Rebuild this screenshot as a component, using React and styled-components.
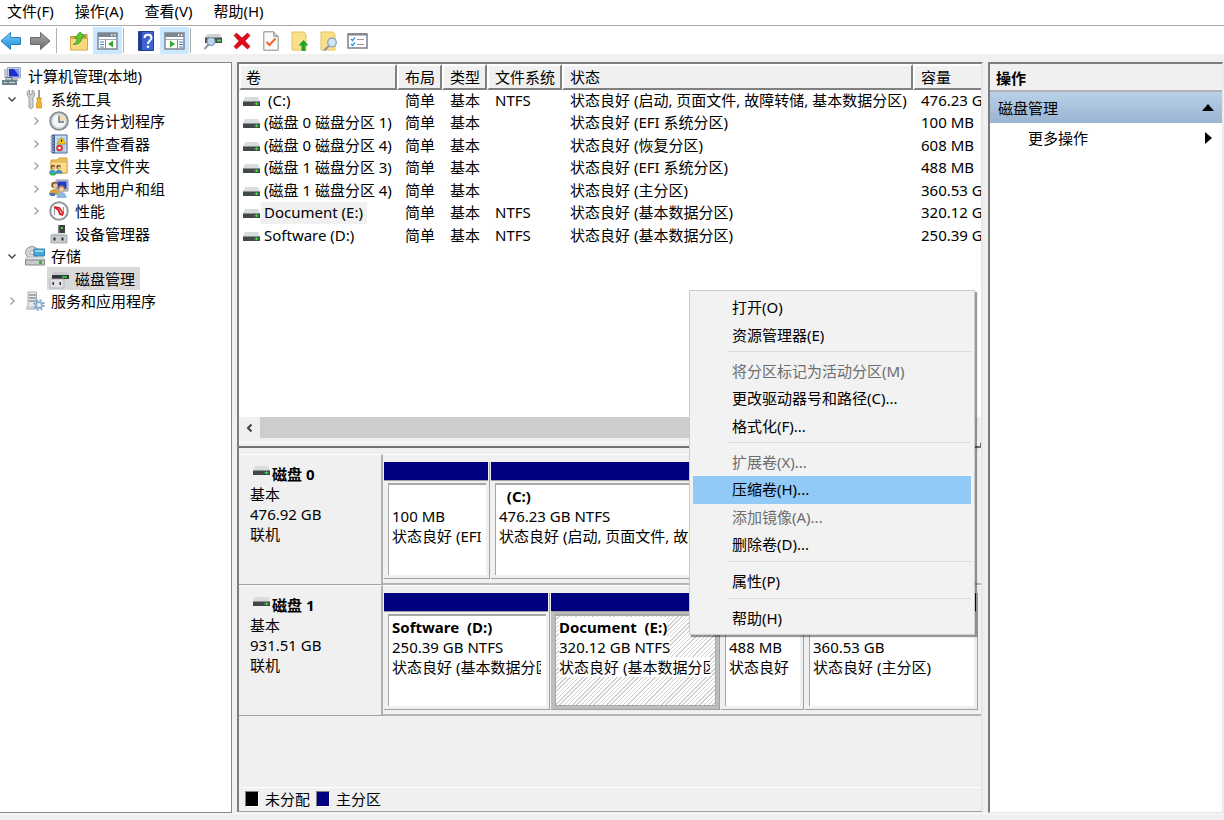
import React, { useState } from "react";
import styled, { createGlobalStyle, css } from "styled-components";

const GlobalStyle = createGlobalStyle`
  * {
    box-sizing: border-box;
  }

  body {
    margin: 0;
    background: #f0f0f0;
    color: #000000;
    font-family: "Noto Sans", "Noto Sans CJK SC", sans-serif;
    font-size: 15px;
    line-height: 22px;
  }

  button {
    margin: 0;
    padding: 0;
    border: none;
    background: none;
    color: inherit;
    font: inherit;
    text-align: left;
    white-space: nowrap;
  }

  ul {
    margin: 0;
    padding: 0;
    list-style: none;
  }

  svg {
    display: block;
    flex: none;
  }
`;

const Window = styled.div`
  position: relative;
  display: flex;
  flex-direction: column;
  min-height: 100vh;
  overflow: hidden;
`;

const MenuBar = styled.nav`
  display: flex;
  gap: 21px;
  height: 26px;
  padding: 0 7px 4px;
  background: #ffffff;
  border-bottom: 1px solid #a9a9a9;
`;

const ToolBar = styled.div`
  display: flex;
  align-items: flex-end;
  height: 28px;
  background: #ffffff;
`;

const ToolGroup = styled.div`
  display: flex;
  gap: ${(props) => (props.$nav ? "7px" : "0")};
  padding-right: ${(props) => (props.$nav ? "4px" : "0")};
`;

const ToolButton = styled.button`
  display: flex;
  align-items: center;
  justify-content: center;
  width: ${(props) => (props.$nav ? "22px" : "29px")};
  height: 27px;
  background: ${(props) => (props.$active ? "#cce8ff" : "transparent")};
`;

const ToolSeparator = styled.div`
  width: 1px;
  height: 25px;
  margin: 0 7px 1px 1px;
  background: #b0b0b0;
`;

const Workspace = styled.main`
  display: flex;
  flex: 1;
  gap: 5px;
  padding: 8px 1px 0 0;
`;

const StatusBar = styled.footer`
  height: 7px;
  border-top: 1px solid #f8f8f8;
`;

/* left tree */

const Tree = styled.ul`
  flex: none;
  width: 232px;
  padding-top: 2px;
  background: #ffffff;
  border: 1px solid #828790;
  border-left: none;
`;

const TreeRow = styled.li`
  display: flex;
  height: 22px;
  padding-left: ${(props) => (props.$level > 1 ? "24px" : "0")};

  &:nth-child(even) {
    height: 23px;
  }
`;

const Toggle = styled.span`
  display: flex;
  align-items: center;
  justify-content: center;
  width: 23px;
`;

const TreeLabel = styled.button`
  display: flex;
  align-items: center;
  gap: 6px;
  padding: 0 5px 0 2px;
  background: ${(props) => (props.$selected ? "#d9d9d9" : "transparent")};
`;

/* middle pane */

const Center = styled.section`
  display: flex;
  flex: 1;
  flex-direction: column;
  min-width: 0;
  margin-bottom: 1px;
  border-style: solid;
  border-width: 2px 2px 1px;
  border-color: #7c7c7c #e6e6e6 #a0a0a0 #7c7c7c;
`;

const VolumePane = styled.div`
  display: flex;
  flex-direction: column;
  height: 374px;
  overflow: hidden;
  background: #ffffff;
`;

const VolumeTable = styled.table`
  width: 100%;
  table-layout: fixed;
  border-collapse: separate;
  border-spacing: 0;
`;

const Col = styled.col`
  width: ${(props) => props.$width || "auto"};
`;

const HeadCell = styled.th`
  height: 26px;
  padding: 0 0 0 6px;
  overflow: hidden;
  background: #f0f0f0;
  border-style: solid;
  border-width: 2px;
  border-color: #ffffff #808080 #808080 #ffffff;
  font-weight: normal;
  text-align: left;
  white-space: nowrap;

  &:first-child {
    padding-left: 5px;
  }

  &:last-child {
    border-right: none;
  }
`;

const VolumeRow = styled.tr`
  height: 22px;

  &:nth-child(even) {
    height: 23px;
  }
`;

const Cell = styled.td`
  padding: 0 0 0 8px;
  overflow: hidden;
  line-height: 20px;
  vertical-align: top;
  white-space: nowrap;

  &:first-child {
    padding-left: 4px;
  }
`;

const VolumeName = styled.div`
  display: flex;
  align-items: center;
  gap: 1px;
`;

const NameText = styled.span`
  padding: 0 4px 2px 3px;
  background: ${(props) => (props.$selected ? "#f0f0f0" : "transparent")};
  white-space: pre;
`;

const ScrollBar = styled.div`
  display: flex;
  height: 21px;
  margin-top: auto;
  background: #f0f0f0;
`;

const ScrollArrow = styled.button`
  display: flex;
  align-items: center;
  justify-content: center;
  width: 21px;
`;

const ScrollThumb = styled.div`
  width: 68%;
  background: #cdcdcd;
`;

const Splitter = styled.div`
  height: 6px;
  margin-top: 4px;
  border-style: solid;
  border-width: 1px 1px 2px 0;
  border-color: #ffffff #707070 #707070;
`;

const DiskList = styled.div`
  flex: 1;
  padding-top: 6px;
`;

const Disk = styled.section`
  display: flex;
  height: 131px;
`;

const DiskLabel = styled.div`
  flex: none;
  width: 144px;
  padding: 9px 0 0 11px;
  border-style: solid;
  border-width: 1px 2px 1px 0;
  border-color: #ffffff #b0b0b0 #a0a0a0;
  line-height: 20px;
`;

const DiskTitle = styled.div`
  display: flex;
  gap: 2px;
  padding-left: 3px;
  font-weight: bold;

  svg {
    margin-top: 2px;
  }
`;

const Partitions = styled.div`
  display: grid;
  flex: 1;
  grid-template-columns: ${(props) => props.$columns};
  gap: 1px;
  min-width: 0;
  padding: 7px 3px 4px 1px;
  border-top: 1px solid #ffffff;
  border-bottom: 2px solid #b4b4b4;
`;

const Partition = styled.div`
  display: flex;
  flex-direction: column;
  min-width: 0;
  border-right: 1px solid #a0a0a0;
  border-bottom: 1px solid #a0a0a0;
  background: ${(props) => (props.$selected ? "#bdbdbd" : "#f0f0f0")};
`;

const PartitionBar = styled.div`
  height: 19px;
  margin-right: 1px;
  background: #000080;
  border-bottom: 1px solid #a0a0a0;
`;

const PartitionBox = styled.div`
  flex: 1;
  margin: 2px 3px 3px 4px;
  padding: 1px 5px 0 3px;
  background: #ffffff;
  border-style: solid;
  border-width: 2px 0 0 1px;
  border-color: #a8a8a8;
  line-height: 20px;

  ${(props) =>
    props.$selected &&
    css`
      border-width: 2px 1px 1px;
      background: repeating-linear-gradient(
        135deg,
        #ffffff 0 2px,
        #d0d0d0 2px 3px
      );
    `}
`;

const PartitionLine = styled.div`
  height: 20px;
  overflow: hidden;
  font-weight: ${(props) => (props.$bold ? "bold" : "normal")};
  text-overflow: clip;
  white-space: pre;

  span {
    background: #ffffff;
  }
`;

const Legend = styled.div`
  display: flex;
  align-items: center;
  gap: 6px;
  height: 24px;
  padding: 0 0 1px 6px;
  border-top: 1px solid #ffffff;
`;

const Swatch = styled.span`
  width: 14px;
  height: 16px;
  background: ${(props) => props.$color};
  border-style: solid;
  border-width: 1px;
  border-color: #808080 #ffffff #ffffff #808080;
`;

/* right pane */

const Actions = styled.aside`
  flex: none;
  width: 235px;
  background: #ffffff;
  border-style: solid;
  border-width: 2px 1px 1px 2px;
  border-color: #7c7c7c #e6e6e6 #e6e6e6 #7c7c7c;
`;

const ActionsTitle = styled.h2`
  height: 28px;
  margin: 0;
  padding: 3px 6px 0;
  background: #f0f0f0;
  border-bottom: 2px solid #b4b4b4;
  font-size: 15px;
  font-weight: bold;
`;

const ActionsGroup = styled.button`
  display: flex;
  align-items: center;
  justify-content: space-between;
  width: 100%;
  height: 31px;
  padding: 0 8px;
  background: linear-gradient(#b9d1ea, #99b4d1);
`;

const ActionsItem = styled.button`
  display: flex;
  align-items: center;
  justify-content: space-between;
  width: 100%;
  height: 30px;
  padding: 0 10px 0 38px;
`;

/* context menu of the selected volume */

const ContextMenu = styled.ul`
  position: absolute;
  top: 290px;
  left: 689px;
  width: 286px;
  padding: 3px 3px 1px;
  background: #f2f2f2;
  border: 1px solid #cccccc;
  box-shadow: 2px 2px 1px rgba(0, 0, 0, 0.4);
`;

const MenuEntry = styled.li`
  height: 27px;

  &:nth-child(odd),
  &:last-child {
    height: 28px;
  }
`;

const MenuItem = styled.button`
  width: 100%;
  height: 100%;
  padding: 0 0 2px 39px;
  background: ${(props) => (props.$highlight ? "#91c9f7" : "transparent")};

  &:disabled {
    color: #6d6d6d;
  }
`;

const MenuDivider = styled.li`
  height: 9px;
  padding: 2px 0 0 35px;

  &::before {
    content: "";
    display: block;
    height: 1px;
    background: #dadada;
  }
`;

/* icons */

const DiskIcon = () => (
  <svg width="17" height="9" viewBox="0 0 17 9">
    <path d="M2 0h13l2 4.500H0z" fill="#d9dcdf" />
    <path d="M0 4.500h17V9H0z" fill="#45484a" />
    <path d="M0 4h17v1H0z" fill="#8d9092" />
    <path d="M11.500 6.800h4M13.500 5.300v3" stroke="#4be04b" strokeWidth="1" />
  </svg>
);

const ArrowIcon = ({ forward }) => (
  <svg width="22" height="20" viewBox="0 0 22 20">
    <defs>
      <linearGradient id={forward ? "fwd" : "back"} x1="0" y1="0" x2="0" y2="1">
        <stop offset="0" stopColor={forward ? "#a9a9a9" : "#7fd0f7"} />
        <stop offset="1" stopColor={forward ? "#6d6d6d" : "#1689d6"} />
      </linearGradient>
    </defs>
    <path
      d={
        forward
          ? "M1.500 6.500h10V1.500L21 10l-9.500 8.500v-5h-10z"
          : "M20.500 6.500h-10V1.500L1 10l9.500 8.500v-5h10z"
      }
      fill={forward ? "url(#fwd)" : "url(#back)"}
      stroke={forward ? "#6a6a6a" : "#2d84bd"}
      strokeLinejoin="round"
    />
  </svg>
);

const FolderOpenIcon = () => (
  <svg width="20" height="20" viewBox="0 0 20 20">
    <path d="M1.500 5.500h8l2-2h6.500v14H1.500z" fill="#e3b54f" stroke="#c49a3a" />
    <path d="M1.500 7.500h17V19h-17z" fill="#f9d97e" stroke="#d0a648" />
    <path
      d="M4 13.500c3-1 4-3 4-6.500H5.500L11 1l5.500 5h-3.500c0 5-4 8-9 7.500z"
      fill="#5fc335"
      stroke="#3a9a1d"
      strokeWidth="0.800"
    />
  </svg>
);

const PaneIcon = ({ right }) => (
  <svg width="21" height="18" viewBox="0 0 21 18">
    <path d="M1 1h19v16H1z" fill="#ffffff" stroke="#7d8794" strokeWidth="1.500" />
    <path d="M1 1h19v4H1z" fill="#7d8794" />
    <path d="M14 3h1.500M17 3h1.500" stroke="#ffffff" strokeWidth="1.500" />
    <path d="M1 7.500h19" stroke="#a3acb8" />
    {right ? (
      <>
        <path d="M13.500 8v9" stroke="#7d8794" />
        <path d="M15 10h4M15 12.500h4M15 15h4" stroke="#4a7cc0" />
        <path d="M6 8.500v7l5-3.500z" fill="#35a82b" />
      </>
    ) : (
      <>
        <path d="M8.500 8v9" stroke="#7d8794" />
        <path d="M3 10h4M3 12.500h4M3 15h4" stroke="#4a7cc0" />
        <path d="M16 8.500v7l-5-3.500z" fill="#35a82b" />
      </>
    )}
  </svg>
);

const HelpIcon = () => (
  <svg width="18" height="20" viewBox="0 0 18 20">
    <path d="M1.500.5h15v19h-15z" fill="#3f63d0" stroke="#23408f" />
    <path d="M2 1h3v18H2z" fill="#1f3c96" />
    <path
      d="M7.500 7c0-4.500 7-4.500 7 0 0 2.500-3.500 2.500-3.500 6"
      fill="none"
      stroke="#ffffff"
      strokeWidth="2"
    />
    <circle cx="11" cy="15.800" r="1.300" fill="#ffffff" />
  </svg>
);

const DiskSearchIcon = () => (
  <svg width="20" height="18" viewBox="0 0 20 18">
    <path d="M4 2h13l2 3.500H2z" fill="#cfd3d6" />
    <path d="M2 5.500h17V11H2z" fill="#46494b" />
    <path d="M14 8.500h4" stroke="#4be04b" strokeWidth="2" />
    <path d="M6 12l-4.500 5" stroke="#8a98a8" strokeWidth="2" />
    <circle cx="8" cy="9.500" r="4" fill="#b9d6ee" stroke="#8199b0" strokeWidth="1.200" />
  </svg>
);

const DeleteIcon = () => (
  <svg width="18" height="18" viewBox="0 0 18 18">
    <path
      d="M1 3.500L3.500 1 9 6l5.500-5L17 3.500 12 9l5 5.500-2.500 2.500L9 12l-5.500 5L1 14.500 6 9z"
      fill="#e00b18"
      stroke="#a80510"
      strokeWidth="0.600"
    />
  </svg>
);

const CheckPageIcon = () => (
  <svg width="16" height="20" viewBox="0 0 16 20">
    <path d="M.8.800h10l4.400 4.400v14H.8z" fill="#fafafa" stroke="#8a8a8a" />
    <path d="M10.800.800v4.400h4.400" fill="#d8d8d8" stroke="#8a8a8a" />
    <path d="M3.500 11l3 3 6-6.500" fill="none" stroke="#f0652a" strokeWidth="2" />
  </svg>
);

const PageUpIcon = () => (
  <svg width="18" height="20" viewBox="0 0 18 20">
    <path d="M1 1h12l2 3v15H1z" fill="#fbe08a" stroke="#e5bf57" />
    <path d="M12.500 9l5 5.500h-3V20h-4v-5.500h-3z" fill="#1fa52d" />
  </svg>
);

const PageSearchIcon = () => (
  <svg width="20" height="20" viewBox="0 0 20 20">
    <path d="M2 1h12l2 3v15H2z" fill="#fbe08a" stroke="#e5bf57" />
    <path d="M10 15l-5 4.500" stroke="#8a98a8" strokeWidth="2" />
    <circle cx="13" cy="11.500" r="4.300" fill="#cfe7f8" stroke="#7d9fbd" strokeWidth="1.200" />
  </svg>
);

const ListIcon = () => (
  <svg width="21" height="16" viewBox="0 0 21 16">
    <path d="M1 1h19v14H1z" fill="#ffffff" stroke="#7d8087" strokeWidth="1.500" />
    <path d="M1 1.500h19" stroke="#7d8087" strokeWidth="2" />
    <path
      d="M4 6l1.500 1.500L8 4.500M4 11l1.500 1.500L8 9.500"
      fill="none"
      stroke="#2d8fe0"
      strokeWidth="1.200"
    />
    <path d="M10 6.500h7M10 11.500h7" stroke="#9a9a9a" />
  </svg>
);

const ComputerIcon = () => (
  <svg width="20" height="20" viewBox="0 0 20 20">
    <path d="M5.500 1.500h13v10.500h-13z" fill="#c8ccd6" stroke="#a3a9b8" />
    <path d="M7 3h10v7.500H7z" fill="#1b2fd0" />
    <path d="M12 3h5v7z" fill="#7f97f0" />
    <path d="M10 12h5l2 3H9z" fill="#b8bdc5" />
    <path d="M2 3h3v9H2z" fill="#c3c9cf" />
    <path d="M0 14h15v5H0z" fill="#6f8490" />
    <path d="M4 11.500h6v2.500H4z" fill="none" stroke="#5f7480" />
    <path d="M2 16.500h3M7 16.500h6" stroke="#cfdae0" />
  </svg>
);

const ToolsIcon = () => (
  <svg width="20" height="20" viewBox="0 0 20 20">
    <path
      d="M4.500 1v4.500H7V1c3.500 1 3.500 6 1 7.500V18c0 2-4 2-4 0V8.500C1.500 7 1.500 2 4.500 1z"
      fill="#cdd1d4"
      stroke="#858a8e"
      strokeWidth="0.800"
    />
    <path d="M13 1h2v8h-2z" fill="#9aa0a5" />
    <path d="M11.500 9h5l-1 3 1 2v5h-5v-5l1-2z" fill="#f5b52a" stroke="#bb8210" strokeWidth="0.600" />
  </svg>
);

const ClockIcon = () => (
  <svg width="20" height="20" viewBox="0 0 20 20">
    <circle cx="10" cy="10" r="8.800" fill="#f4f5f6" stroke="#8c9094" strokeWidth="2" />
    <path d="M10 10V3.500A6.500 6.500 0 0 1 16.500 10z" fill="#f6dfae" />
    <circle cx="10" cy="10" r="7" fill="none" stroke="#c3c7ca" strokeWidth="0.800" />
    <path d="M10 4.500V11h5" fill="none" stroke="#58728a" strokeWidth="1.400" />
  </svg>
);

const EventIcon = () => (
  <svg width="20" height="20" viewBox="0 0 20 20">
    <path d="M3 1h15v18H3z" fill="#c8dcf2" stroke="#4a659c" />
    <path d="M3 1h3v18H3z" fill="#4a659c" />
    <path d="M1 3h4M1 6h4M1 9h4M1 12h4M1 15h4M1 17.500h4" stroke="#a5afbd" />
    <path d="M8 5h8M8 8h8M8 11h8M8 14h8M8 17h8" stroke="#7f9cc8" strokeWidth="0.800" />
    <path d="M12.500 3l4.500 7H8z" fill="#f7c91d" stroke="#b88c0a" strokeWidth="0.600" />
    <path d="M12.500 5.500v2.500" stroke="#333333" strokeWidth="1.200" />
    <circle cx="10.500" cy="14" r="3.300" fill="#e03232" />
    <circle cx="10.500" cy="14" r="1.300" fill="#ffffff" />
  </svg>
);

const SharedFolderIcon = () => (
  <svg width="20" height="20" viewBox="0 0 20 20">
    <path d="M2 4h6l2-2h8v15H2z" fill="#eec25a" stroke="#cfa03d" />
    <path d="M2 6h16v11H2z" fill="#fbdd8c" stroke="#d9ad4c" />
    <circle cx="4" cy="11" r="2.200" fill="#7a4c2a" />
    <circle cx="9.500" cy="11" r="2.200" fill="#7a4c2a" />
    <circle cx="4.500" cy="11.800" r="1.400" fill="#f0c8a0" />
    <circle cx="10" cy="11.800" r="1.400" fill="#f0c8a0" />
    <path d="M0 17.500c0-5 7-5 7 0z" fill="#3c9bd0" />
    <path d="M6.500 17.500c0-5 7-5 7 0z" fill="#3f8fc4" />
    <path d="M0 17h8l-2 2.500H2z" fill="#3fae62" />
  </svg>
);

const UsersIcon = () => (
  <svg width="20" height="20" viewBox="0 0 20 20">
    <path d="M7 1h12v11H7z" fill="#c5cbd8" stroke="#8e95a5" />
    <path d="M8.500 2.500h9V10h-9z" fill="#2238c8" />
    <circle cx="5.500" cy="6" r="3.300" fill="#8a5a34" />
    <circle cx="6.300" cy="6.800" r="2.300" fill="#f0c8a0" />
    <path d="M0 16c0-8 11-8 11 0z" fill="#d9a23c" />
    <circle cx="12.500" cy="9.500" r="3.300" fill="#a87a4a" />
    <circle cx="12.500" cy="10.300" r="2.300" fill="#f3cfaa" />
    <path d="M7.500 19c0-8 10-8 10 0z" fill="#8fb5e0" />
    <path d="M0 14h6v3H2z" fill="#4a72b8" />
  </svg>
);

const GaugeIcon = () => (
  <svg width="20" height="20" viewBox="0 0 20 20">
    <circle cx="10" cy="10" r="8.800" fill="#fbfbfb" stroke="#94989c" strokeWidth="2" />
    <path d="M5.500 14V6.500M14.500 13V6" fill="none" stroke="#777777" strokeWidth="0.800" />
    <path d="M5.500 6l4 3 1.500 4 3 1" fill="none" stroke="#d8191f" strokeWidth="2" />
    <path d="M5.500 6l5 1 4 6" fill="none" stroke="#d8191f" strokeWidth="1.500" />
  </svg>
);

const DeviceIcon = () => (
  <svg width="20" height="20" viewBox="0 0 20 20">
    <path d="M9 1h7v9H9z" fill="#3c3f42" />
    <path d="M9 1h1.500v9H9z" fill="#7a7d80" />
    <path d="M12 3h2v2h-2z" fill="#45d545" />
    <path d="M4 9h12l2 3H2z" fill="#e3e5e7" />
    <path d="M2 11h16v8H2z" fill="#c9cccf" stroke="#9a9da0" strokeWidth="0.800" />
    <path d="M4.500 13.500h2v3h-2zM12.500 13.500h2v3h-2z" fill="#2d2f31" />
  </svg>
);

const StorageIcon = () => (
  <svg width="20" height="20" viewBox="0 0 20 20">
    <ellipse cx="7" cy="6.500" rx="6.500" ry="6" fill="#d2d6d9" stroke="#8e9498" />
    <ellipse cx="7" cy="6.500" rx="2" ry="1.700" fill="#ffffff" stroke="#9ba1a5" />
    <path d="M9 3h10.500v7H9z" fill="#48a8d8" stroke="#2f82ad" />
    <path d="M10 4h8.500v2H10z" fill="#94d4f0" />
    <path d="M2 11h16l2 3H0z" fill="#e6e8ea" stroke="#a2a5a8" strokeWidth="0.600" />
    <path d="M.5 14h19v5H.5z" fill="#c6cacd" stroke="#85898c" />
    <path d="M14 14.500h3v3.500h-3z" fill="#35b82e" />
  </svg>
);

const DiskManageIcon = () => (
  <svg width="20" height="20" viewBox="0 0 20 20">
    <path d="M5 3h13l2 3H3z" fill="#c7cacd" />
    <path d="M3 6h17v4H3z" fill="#333638" />
    <path d="M13 8h5" stroke="#40dc40" strokeWidth="1.500" />
    <path d="M1 10h14v9H1z" fill="#e0e2e4" stroke="#a7aaad" strokeWidth="0.800" />
    <path d="M3.500 13h1.500v3H3.500zM10.500 13H12v3h-1.500z" fill="#2d2f31" />
  </svg>
);

const ServicesIcon = () => (
  <svg width="20" height="20" viewBox="0 0 20 20">
    <path d="M3 1h8.500v17H3z" fill="#e6eaed" stroke="#a5adb4" />
    <path d="M4 4h7M4 7h7M4 10h7" stroke="#5d6871" strokeWidth="1.200" />
    <path d="M1 15.500h8V19H1z" fill="#c5cbd0" />
    <circle
      cx="14"
      cy="14"
      r="4.800"
      fill="none"
      stroke="#7fa5cc"
      strokeWidth="2"
      strokeDasharray="2 1.770"
    />
    <circle cx="14" cy="14" r="3" fill="#e4eef8" stroke="#7fa5cc" strokeWidth="1.500" />
  </svg>
);

const Chevron = ({ direction }) => {
  const paths = {
    down: "M1.500 3.500L5 7l3.500-3.500",
    right: "M3.500 1.500L7 5 3.500 8.500",
    left: "M6.500 1.500L3 5l3.500 3.500",
  };

  return (
    <svg width="10" height="10" viewBox="0 0 10 10">
      <path
        d={paths[direction]}
        fill="none"
        stroke={direction === "right" ? "#a0a0a0" : "#404040"}
        strokeWidth={direction === "left" ? "2" : "1.400"}
      />
    </svg>
  );
};

const TriangleUp = () => (
  <svg width="12" height="7" viewBox="0 0 12 7">
    <path d="M6 0l6 7H0z" />
  </svg>
);

const TriangleRight = () => (
  <svg width="7" height="12" viewBox="0 0 7 12">
    <path d="M0 0l7 6-7 6z" />
  </svg>
);

const menus = ["文件(F)", "操作(A)", "查看(V)", "帮助(H)"];

const treeItems = [
  { label: "计算机管理(本地)", level: 0, icon: <ComputerIcon /> },
  { label: "系统工具", level: 1, icon: <ToolsIcon />, toggle: "down" },
  { label: "任务计划程序", level: 2, icon: <ClockIcon />, toggle: "right" },
  { label: "事件查看器", level: 2, icon: <EventIcon />, toggle: "right" },
  { label: "共享文件夹", level: 2, icon: <SharedFolderIcon />, toggle: "right" },
  { label: "本地用户和组", level: 2, icon: <UsersIcon />, toggle: "right" },
  { label: "性能", level: 2, icon: <GaugeIcon />, toggle: "right" },
  { label: "设备管理器", level: 2, icon: <DeviceIcon /> },
  { label: "存储", level: 1, icon: <StorageIcon />, toggle: "down" },
  { label: "磁盘管理", level: 2, icon: <DiskManageIcon /> },
  { label: "服务和应用程序", level: 1, icon: <ServicesIcon />, toggle: "right" },
];

const columns = [
  { title: "卷", width: "158px" },
  { title: "布局", width: "45px" },
  { title: "类型", width: "45px" },
  { title: "文件系统", width: "75px" },
  { title: "状态", width: "351px" },
  { title: "容量" },
];

const volumes = [
  [" (C:)", "NTFS", "状态良好 (启动, 页面文件, 故障转储, 基本数据分区)", "476.23 GB"],
  ["(磁盘 0 磁盘分区 1)", "", "状态良好 (EFI 系统分区)", "100 MB"],
  ["(磁盘 0 磁盘分区 4)", "", "状态良好 (恢复分区)", "608 MB"],
  ["(磁盘 1 磁盘分区 3)", "", "状态良好 (EFI 系统分区)", "488 MB"],
  ["(磁盘 1 磁盘分区 4)", "", "状态良好 (主分区)", "360.53 GB"],
  ["Document (E:)", "NTFS", "状态良好 (基本数据分区)", "320.12 GB"],
  ["Software (D:)", "NTFS", "状态良好 (基本数据分区)", "250.39 GB"],
];

const disks = [
  {
    name: "磁盘 0",
    size: "476.92 GB",
    columns: "106fr 364fr 108fr 13fr",
    partitions: [
      { name: "", size: "100 MB", status: "状态良好 (EFI" },
      {
        name: "  (C:)",
        size: "476.23 GB NTFS",
        status: "状态良好 (启动, 页面文件, 故障转储, 基本数据分区)",
      },
      { name: "", size: "608 MB", status: "状态良好" },
    ],
  },
  {
    name: "磁盘 1",
    size: "931.51 GB",
    columns: "166fr 169fr 83fr 173fr",
    partitions: [
      { name: "Software  (D:)", size: "250.39 GB NTFS", status: "状态良好 (基本数据分区)" },
      {
        name: "Document  (E:)",
        size: "320.12 GB NTFS",
        status: "状态良好 (基本数据分区)",
        selected: true,
      },
      { name: "", size: "488 MB", status: "状态良好" },
      { name: "", size: "360.53 GB", status: "状态良好 (主分区)" },
    ],
  },
];

const contextItems = [
  { label: "打开(O)" },
  { label: "资源管理器(E)" },
  null,
  { label: "将分区标记为活动分区(M)", disabled: true },
  { label: "更改驱动器号和路径(C)..." },
  { label: "格式化(F)..." },
  null,
  { label: "扩展卷(X)...", disabled: true },
  { label: "压缩卷(H)..." },
  { label: "添加镜像(A)...", disabled: true },
  { label: "删除卷(D)..." },
  null,
  { label: "属性(P)" },
  null,
  { label: "帮助(H)" },
];

const App = () => {
  const [treeSelected, setTreeSelected] = useState("磁盘管理");
  const [hovered, setHovered] = useState("压缩卷(H)...");

  return (
    <Window>
      <GlobalStyle />
      <MenuBar>
        {menus.map((menu) => (
          <button key={menu} type="button">
            {menu}
          </button>
        ))}
      </MenuBar>

      <ToolBar>
        <ToolGroup $nav>
          <ToolButton $nav aria-label="后退"><ArrowIcon /></ToolButton>
          <ToolButton $nav aria-label="前进"><ArrowIcon forward /></ToolButton>
        </ToolGroup>
        <ToolSeparator />
        <ToolGroup>
          <ToolButton aria-label="上移一级"><FolderOpenIcon /></ToolButton>
          <ToolButton $active aria-label="显示控制台树"><PaneIcon /></ToolButton>
        </ToolGroup>
        <ToolSeparator />
        <ToolGroup>
          <ToolButton aria-label="帮助"><HelpIcon /></ToolButton>
          <ToolButton $active aria-label="显示操作窗格"><PaneIcon right /></ToolButton>
        </ToolGroup>
        <ToolSeparator />
        <ToolGroup>
          <ToolButton aria-label="重新扫描磁盘"><DiskSearchIcon /></ToolButton>
          <ToolButton aria-label="删除"><DeleteIcon /></ToolButton>
          <ToolButton aria-label="属性"><CheckPageIcon /></ToolButton>
          <ToolButton aria-label="打开"><PageUpIcon /></ToolButton>
          <ToolButton aria-label="资源管理器"><PageSearchIcon /></ToolButton>
          <ToolButton aria-label="设置"><ListIcon /></ToolButton>
        </ToolGroup>
      </ToolBar>

      <Workspace>
        <Tree>
          {treeItems.map(({ label, level, icon, toggle }) => (
            <TreeRow key={label} $level={level}>
              {level > 0 && <Toggle>{toggle && <Chevron direction={toggle} />}</Toggle>}
              <TreeLabel
                type="button"
                $selected={label === treeSelected}
                onClick={() => setTreeSelected(label)}
              >
                {icon}
                {label}
              </TreeLabel>
            </TreeRow>
          ))}
        </Tree>

        <Center>
          <VolumePane>
            <VolumeTable>
              <colgroup>
                {columns.map((column) => (
                  <Col key={column.title} $width={column.width} />
                ))}
              </colgroup>
              <thead>
                <tr>
                  {columns.map((column) => (
                    <HeadCell key={column.title}>{column.title}</HeadCell>
                  ))}
                </tr>
              </thead>
              <tbody>
                {volumes.map(([name, fileSystem, status, capacity]) => (
                  <VolumeRow key={name}>
                    <Cell>
                      <VolumeName>
                        <DiskIcon />
                        <NameText $selected={name === "Document (E:)"}>{name}</NameText>
                      </VolumeName>
                    </Cell>
                    <Cell>简单</Cell>
                    <Cell>基本</Cell>
                    <Cell>{fileSystem}</Cell>
                    <Cell>{status}</Cell>
                    <Cell>{capacity}</Cell>
                  </VolumeRow>
                ))}
              </tbody>
            </VolumeTable>
            <ScrollBar>
              <ScrollArrow type="button" aria-label="向左滚动">
                <Chevron direction="left" />
              </ScrollArrow>
              <ScrollThumb />
            </ScrollBar>
          </VolumePane>

          <Splitter />

          <DiskList>
            {disks.map((disk) => (
              <Disk key={disk.name}>
                <DiskLabel>
                  <DiskTitle>
                    <DiskIcon />
                    {disk.name}
                  </DiskTitle>
                  <div>基本</div>
                  <div>{disk.size}</div>
                  <div>联机</div>
                </DiskLabel>
                <Partitions $columns={disk.columns}>
                  {disk.partitions.map(({ name, size, status, selected }) => (
                    <Partition key={size} $selected={selected}>
                      <PartitionBar />
                      <PartitionBox $selected={selected}>
                        <PartitionLine $bold><span>{name}</span></PartitionLine>
                        <PartitionLine><span>{size}</span></PartitionLine>
                        <PartitionLine><span>{status}</span></PartitionLine>
                      </PartitionBox>
                    </Partition>
                  ))}
                </Partitions>
              </Disk>
            ))}
          </DiskList>

          <Legend>
            <Swatch $color="#000000" />
            未分配
            <Swatch $color="#000080" />
            主分区
          </Legend>
        </Center>

        <Actions>
          <ActionsTitle>操作</ActionsTitle>
          <ActionsGroup type="button">
            磁盘管理
            <TriangleUp />
          </ActionsGroup>
          <ActionsItem type="button">
            更多操作
            <TriangleRight />
          </ActionsItem>
        </Actions>
      </Workspace>

      <StatusBar />

      <ContextMenu>
        {contextItems.map((item, index) =>
          item ? (
            <MenuEntry key={item.label}>
              <MenuItem
                type="button"
                disabled={item.disabled}
                $highlight={item.label === hovered}
                onMouseEnter={() => setHovered(item.label)}
              >
                {item.label}
              </MenuItem>
            </MenuEntry>
          ) : (
            <MenuDivider key={index} />
          )
        )}
      </ContextMenu>
    </Window>
  );
};

export default App;
